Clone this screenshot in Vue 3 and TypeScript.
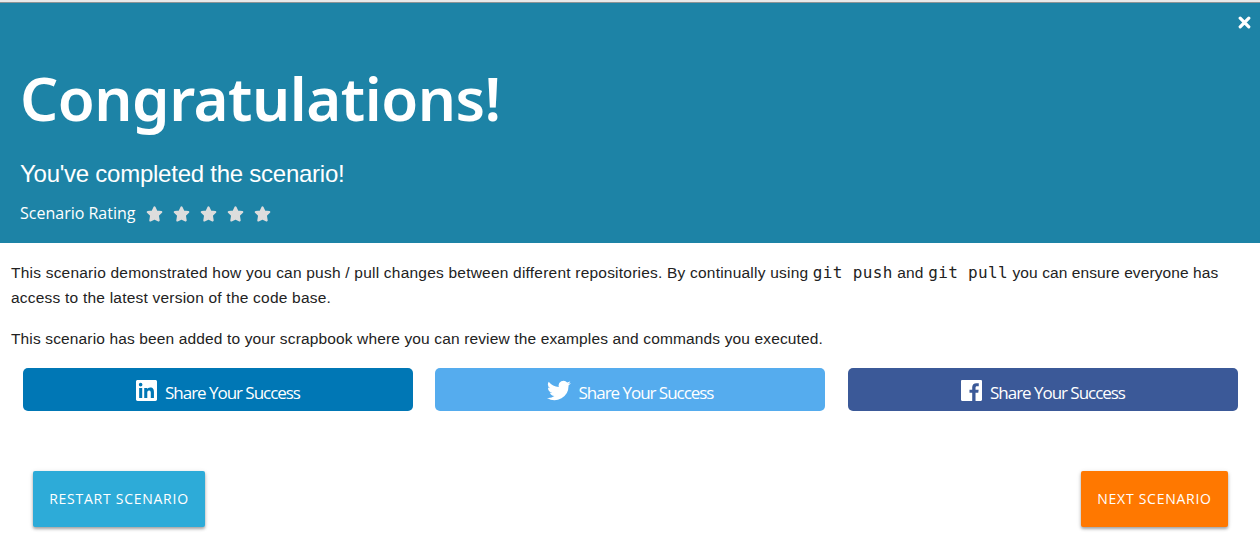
<script setup lang="ts">
interface ShareLink {
  network: string
  viewBox: string
  width: number
  path: string
}

const stars: number[] = [1, 2, 3, 4, 5]

const shareLinks: ShareLink[] = [
  {
    network: 'linkedin',
    viewBox: '0 0 24 24',
    width: 21,
    path: 'M22.2 0H1.8C.8 0 0 .8 0 1.7v20.6c0 .9.8 1.7 1.8 1.7h20.4c1 0 1.8-.8 1.8-1.7V1.7C24 .8 23.200 0 22.200 0zM7.100 20.500H3.600V9h3.500v11.500zM5.300 7.400a2.060 2.060 0 1 1 0-4.120 2.060 2.060 0 0 1 0 4.120zM20.500 20.500h-3.600v-5.600c0-1.300 0-3-1.900-3-1.800 0-2.100 1.400-2.100 2.900v5.700H9.400V9h3.400v1.600c.5-.9 1.600-1.900 3.400-1.900 3.600 0 4.300 2.400 4.300 5.500v6.300z'
  },
  {
    network: 'twitter',
    viewBox: '0 2.200 24 19.600',
    width: 24,
    path: 'M24 4.600a10 10 0 0 1-2.800.8 4.900 4.900 0 0 0 2.100-2.700 9.900 9.900 0 0 1-3.100 1.200 4.900 4.900 0 0 0-8.400 4.500A14 14 0 0 1 1.700 3.200a4.900 4.900 0 0 0 1.500 6.500 4.900 4.900 0 0 1-2.200-.6v.1a4.900 4.900 0 0 0 4 4.800 5 5 0 0 1-2.200.1 4.900 4.900 0 0 0 4.600 3.400A9.900 9.900 0 0 1 0 19.500a14 14 0 0 0 21.500-12.400A10 10 0 0 0 24 4.600z'
  },
  {
    network: 'facebook',
    viewBox: '0 0 24 24',
    width: 21,
    path: 'M22.700 0H1.300C.6 0 0 .6 0 1.300v21.400c0 .7.600 1.300 1.300 1.300h11.500v-9.300H9.700v-3.600h3.100V8.400c0-3.100 1.900-4.800 4.700-4.800 1.300 0 2.500.1 2.800.1V7h-1.900c-1.500 0-1.800.7-1.800 1.800v2.300h3.600l-.5 3.600h-3.100V24h6.100c.7 0 1.300-.6 1.300-1.300V1.300C24 .6 23.400 0 22.700 0z'
  }
]
</script>

<template>
  <main class="dialog">
    <header class="hero">
      <button class="close" type="button" aria-label="Close">
        <svg viewBox="0 0 13 13" width="13" height="13">
          <path d="M2.200 2.200 10.800 10.800M10.800 2.200 2.200 10.800" stroke="#fff" stroke-width="3.200" stroke-linecap="round" />
        </svg>
      </button>
      <h1>Congratulations!</h1>
      <p class="subtitle">You've completed the scenario!</p>
      <div class="rating">
        <span class="rating-label">Scenario Rating</span>
        <svg v-for="star in stars" :key="star" class="star" viewBox="0 0 17 16" width="17" height="16">
          <path d="M8.500 1.300 10.500 5.500 15.300 6.100 11.900 9.400 12.700 14.500 8.500 12.700 4.300 14.500 5.100 9.400 1.700 6.100 6.500 5.500z" fill="#ddd" stroke="#ddd" stroke-width="2" stroke-linejoin="round" />
        </svg>
      </div>
    </header>

    <section class="summary">
      <p>
        This scenario demonstrated how you can push / pull changes between different repositories. By continually using
        <code>git push</code> and <code>git pull</code> <span class="tail">you can ensure everyone has</span><br />
        access to the latest version of the code base.
      </p>
      <p class="scrapbook">This scenario has been added to your scrapbook where you can review the examples and commands you executed.</p>
    </section>

    <div class="shares">
      <button v-for="link in shareLinks" :key="link.network" type="button" class="share" :class="link.network">
        <svg :viewBox="link.viewBox" :width="link.width" height="21"><path :d="link.path" fill="#fff" /></svg>
        <span>Share Your Success</span>
      </button>
    </div>

    <nav class="actions">
      <button type="button" class="action restart">RESTART SCENARIO</button>
      <button type="button" class="action next">NEXT SCENARIO</button>
    </nav>
  </main>
</template>

<style>
body {
  margin: 0;
  background: #fff;
}
</style>

<style scoped>
.dialog {
  width: 1260px;
  height: 545px;
  overflow: hidden;
  background: #fff;
  font-family: "Liberation Sans", Arial, sans-serif;
}

button {
  border: 0;
  margin: 0;
  padding: 0;
  color: #fff;
  font-family: "Open Sans", sans-serif;
}

h1,
p {
  margin: 0;
}

.hero {
  position: relative;
  box-sizing: border-box;
  height: 243px;
  padding: 56px 20px 0;
  border-top: 2px solid #e9e9e9;
  box-shadow: inset 0 1px #8d9496;
  background: #1d83a6;
  color: #fff;
}

.close {
  position: absolute;
  top: 14px;
  right: 9px;
  width: 13px;
  height: 13px;
  background: none;
}

svg {
  display: block;
  flex: none;
}

h1 {
  height: 80px;
  font: 600 60px/80px "Noto Sans", sans-serif;
  letter-spacing: -0.5px;
  white-space: nowrap;
}

.subtitle {
  margin-top: 19px;
  font-size: 24px;
  line-height: 34px;
  letter-spacing: -0.25px;
  white-space: nowrap;
}

.rating {
  display: flex;
  align-items: center;
  height: 24px;
  margin-top: 10px;
}

.rating-label {
  width: 126px;
  font: 16px/24px "Open Sans", sans-serif;
  white-space: nowrap;
}

.star {
  margin: 2px 10px 0 0;
}

.summary {
  padding: 17px 0 0 11px;
  color: #222;
  font-size: 15.5px;
  line-height: 25px;
  letter-spacing: 0.215px;
  white-space: nowrap;
}

.summary .scrapbook {
  margin-top: 16px;
  letter-spacing: 0.14px;
}

.tail {
  letter-spacing: 0.09px;
}

code {
  font-family: "DejaVu Sans Mono", monospace;
  font-size: 16px;
  line-height: 20px;
  letter-spacing: 0.34px;
}

.shares {
  display: flex;
  gap: 22px;
  padding: 17px 22px 0 23px;
}

.share {
  display: flex;
  justify-content: center;
  width: 390px;
  height: 43px;
  padding-top: 12px;
  border-radius: 5px;
  font-size: 17px;
  line-height: 26px;
  letter-spacing: -1.03px;
  white-space: nowrap;
}

.share span {
  margin-left: 8px;
}

.linkedin {
  background: #0077b5;
}

.twitter {
  background: #55acee;
}

.facebook {
  margin-left: 1px;
  background: #3b5998;
}

.actions {
  display: flex;
  justify-content: space-between;
  padding: 60px 32px 0 33px;
}

.action {
  height: 56px;
  padding-bottom: 1px;
  border-radius: 2px;
  box-shadow: 0 2px 3px rgba(0, 0, 0, 0.3), 0 1px 5px rgba(0, 0, 0, 0.12);
  font-size: 14px;
  letter-spacing: 0.74px;
  white-space: nowrap;
}

.restart {
  width: 172px;
  background: #2dabd8;
}

.next {
  width: 147px;
  background: #ff7800;
}
</style>
